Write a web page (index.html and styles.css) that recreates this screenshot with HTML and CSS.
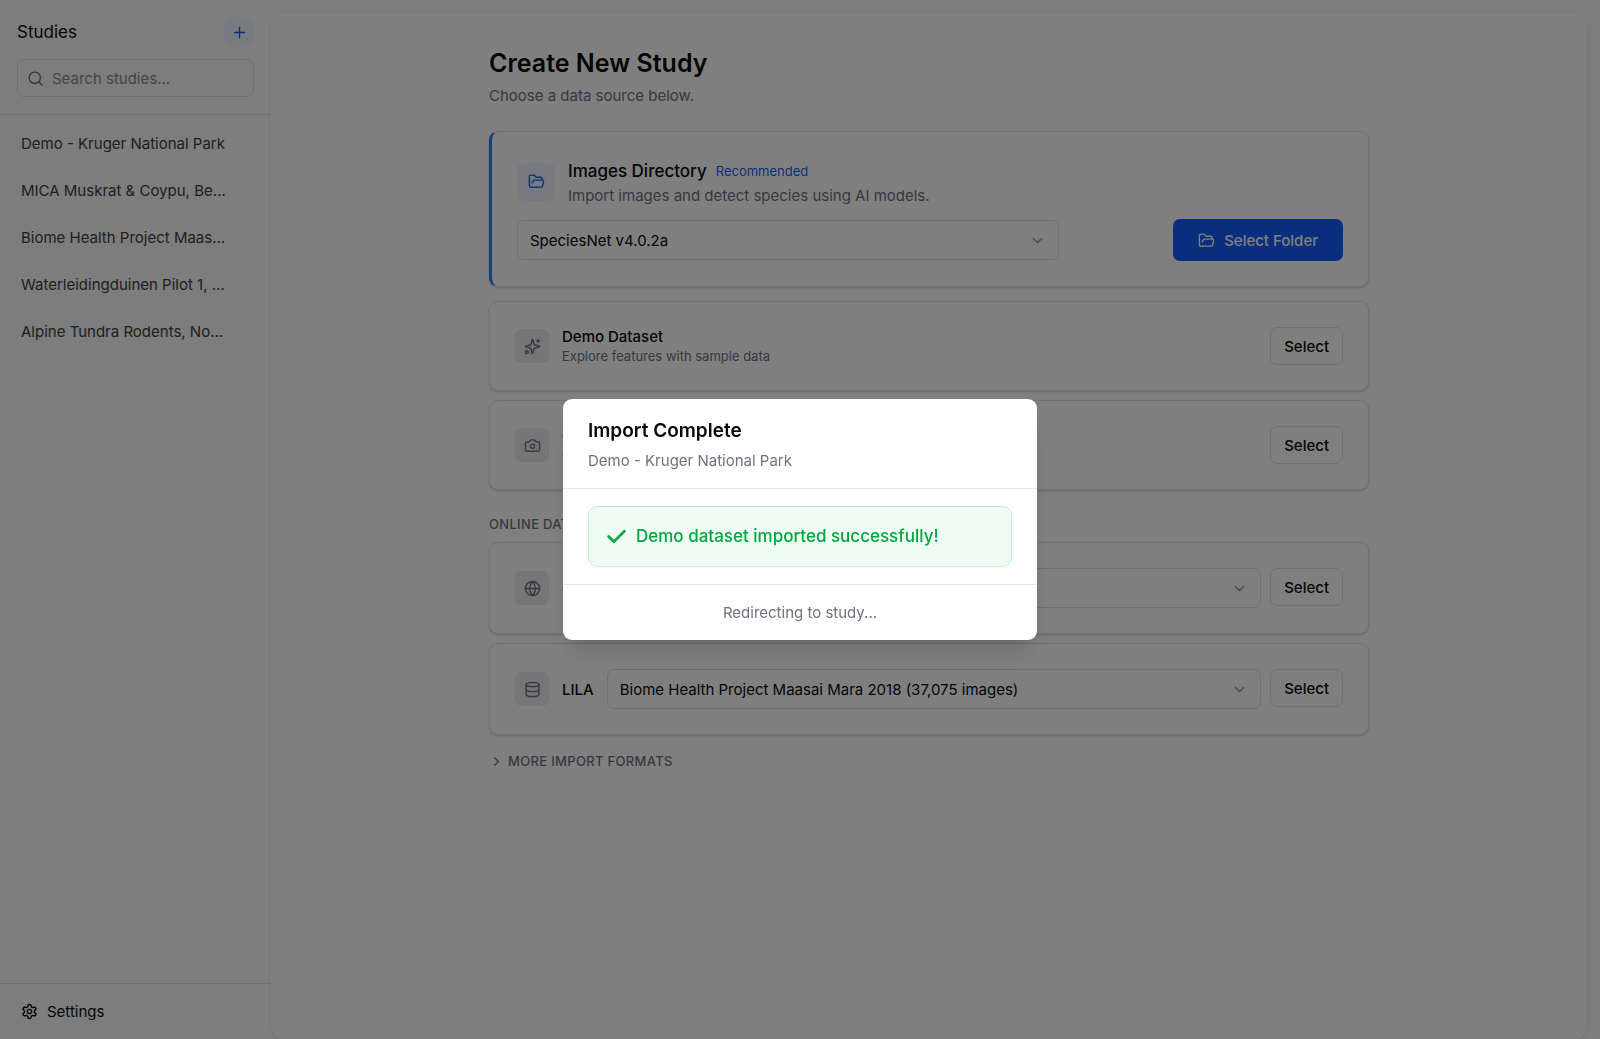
FILE: index.html
```html
<!DOCTYPE html>
<html lang="en">
<head>
    <meta charset="UTF-8">
    <meta name="viewport" content="width=device-width, initial-scale=1.0">
    <title>Create New Study</title>
    <link rel="stylesheet" href="styles.css">
</head>
<body>
    <aside class="sidebar">
        <header class="sidebar-header">
            <div class="sidebar-title">
                <h2>Studies</h2>
                <button class="add-btn" aria-label="Add study">
                    <svg class="icon" viewBox="0 0 24 24"><path d="M5 12h14M12 5v14"/></svg>
                </button>
            </div>
            <label class="search">
                <svg class="icon" viewBox="0 0 24 24"><circle cx="11" cy="11" r="8"/><path d="m21 21-4.3-4.3"/></svg>
                <input type="search" placeholder="Search studies..." aria-label="Search studies">
            </label>
        </header>
        <nav class="study-list">
            <a href="#">Demo - Kruger National Park</a>
            <a href="#">MICA Muskrat &amp; Coypu, Be…</a>
            <a href="#">Biome Health Project Maas…</a>
            <a href="#">Waterleidingduinen Pilot 1, …</a>
            <a href="#">Alpine Tundra Rodents, No…</a>
        </nav>
        <footer class="sidebar-footer">
            <a href="#">
                <svg class="icon" viewBox="0 0 24 24"><path d="M12.22 2h-.44a2 2 0 0 0-2 2v.18a2 2 0 0 1-1 1.73l-.43.25a2 2 0 0 1-2 0l-.15-.08a2 2 0 0 0-2.73.73l-.22.38a2 2 0 0 0 .73 2.73l.15.1a2 2 0 0 1 1 1.72v.51a2 2 0 0 1-1 1.74l-.15.09a2 2 0 0 0-.73 2.73l.22.38a2 2 0 0 0 2.73.73l.15-.08a2 2 0 0 1 2 0l.43.25a2 2 0 0 1 1 1.73V20a2 2 0 0 0 2 2h.44a2 2 0 0 0 2-2v-.18a2 2 0 0 1 1-1.73l.43-.25a2 2 0 0 1 2 0l.15.08a2 2 0 0 0 2.73-.73l.22-.39a2 2 0 0 0-.73-2.73l-.15-.08a2 2 0 0 1-1-1.74v-.5a2 2 0 0 1 1-1.74l.15-.09a2 2 0 0 0 .73-2.73l-.22-.38a2 2 0 0 0-2.73-.73l-.15.08a2 2 0 0 1-2 0l-.43-.25a2 2 0 0 1-1-1.73V4a2 2 0 0 0-2-2z"/><circle cx="12" cy="12" r="3"/></svg>
                Settings
            </a>
        </footer>
    </aside>

    <main class="panel">
        <div class="content">
            <h1>Create New Study</h1>
            <p class="subtitle">Choose a data source below.</p>

            <section class="card featured">
                <div class="featured-header">
                    <span class="tile tile-blue">
                        <svg class="icon" viewBox="0 0 24 24"><path d="m6 14 1.5-2.9A2 2 0 0 1 9.24 10H20a2 2 0 0 1 1.94 2.5l-1.54 6a2 2 0 0 1-1.95 1.5H4a2 2 0 0 1-2-2V5a2 2 0 0 1 2-2h3.9a2 2 0 0 1 1.69.9l.81 1.2a2 2 0 0 0 1.67.9H18a2 2 0 0 1 2 2v2"/></svg>
                    </span>
                    <div>
                        <div class="featured-title">
                            <h3>Images Directory</h3>
                            <span class="badge">Recommended</span>
                        </div>
                        <p>Import images and detect species using AI models.</p>
                    </div>
                </div>
                <div class="featured-row">
                    <div class="select">
                        <select aria-label="Model">
                            <option>SpeciesNet v4.0.2a</option>
                        </select>
                        <svg class="icon" viewBox="0 0 24 24"><path d="m6 9 6 6 6-6"/></svg>
                    </div>
                    <button class="primary-btn">
                        <svg class="icon" viewBox="0 0 24 24"><path d="m6 14 1.5-2.9A2 2 0 0 1 9.24 10H20a2 2 0 0 1 1.94 2.5l-1.54 6a2 2 0 0 1-1.95 1.5H4a2 2 0 0 1-2-2V5a2 2 0 0 1 2-2h3.9a2 2 0 0 1 1.69.9l.81 1.2a2 2 0 0 0 1.67.9H18a2 2 0 0 1 2 2v2"/></svg>
                        Select Folder
                    </button>
                </div>
            </section>

            <div class="card-group">
                <section class="card">
                    <span class="tile">
                        <svg class="icon" viewBox="0 0 24 24"><path d="M9.937 15.5A2 2 0 0 0 8.5 14.063l-6.135-1.582a.5.5 0 0 1 0-.962L8.5 9.936A2 2 0 0 0 9.937 8.5l1.582-6.135a.5.5 0 0 1 .963 0L14.063 8.5A2 2 0 0 0 15.5 9.937l6.135 1.581a.5.5 0 0 1 0 .964L15.5 14.063a2 2 0 0 0-1.437 1.437l-1.582 6.135a.5.5 0 0 1-.963 0z"/><path d="M20 2v4M22 4h-4"/><circle cx="4" cy="20" r="2"/></svg>
                    </span>
                    <div class="card-text">
                        <h3>Demo Dataset</h3>
                        <p>Explore features with sample data</p>
                    </div>
                    <button class="select-btn">Select</button>
                </section>
                <section class="card">
                    <span class="tile">
                        <svg class="icon" viewBox="0 0 24 24"><path d="M14.5 4h-5L7 7H4a2 2 0 0 0-2 2v9a2 2 0 0 0 2 2h16a2 2 0 0 0 2-2V9a2 2 0 0 0-2-2h-3z"/><circle cx="12" cy="13" r="3"/></svg>
                    </span>
                    <div class="card-text">
                        <h3>Camtrap DP</h3>
                        <p>Camera Trap Data Package</p>
                    </div>
                    <button class="select-btn">Select</button>
                </section>
            </div>

            <h2 class="section-label">Online Datasets</h2>
            <div class="card-group">
                <section class="card">
                    <span class="tile">
                        <svg class="icon" viewBox="0 0 24 24"><circle cx="12" cy="12" r="10"/><path d="M12 2a14.5 14.5 0 0 0 0 20 14.5 14.5 0 0 0 0-20M2 12h20"/></svg>
                    </span>
                    <label for="gbif">GBIF</label>
                    <div class="select">
                        <select id="gbif">
                            <option>MICA Muskrat &amp; Coypu</option>
                        </select>
                        <svg class="icon" viewBox="0 0 24 24"><path d="m6 9 6 6 6-6"/></svg>
                    </div>
                    <button class="select-btn">Select</button>
                </section>
                <section class="card">
                    <span class="tile">
                        <svg class="icon" viewBox="0 0 24 24"><ellipse cx="12" cy="5" rx="9" ry="3"/><path d="M3 5v14a9 3 0 0 0 18 0V5"/><path d="M3 12a9 3 0 0 0 18 0"/></svg>
                    </span>
                    <label for="lila">LILA</label>
                    <div class="select">
                        <select id="lila">
                            <option>Biome Health Project Maasai Mara 2018 (37,075 images)</option>
                        </select>
                        <svg class="icon" viewBox="0 0 24 24"><path d="m6 9 6 6 6-6"/></svg>
                    </div>
                    <button class="select-btn">Select</button>
                </section>
            </div>

            <button class="more-btn" aria-expanded="false">
                <svg class="icon" viewBox="0 0 24 24"><path d="m9 18 6-6-6-6"/></svg>
                More Import Formats
            </button>
        </div>
    </main>

    <div class="overlay">
        <div class="modal" role="dialog" aria-modal="true" aria-labelledby="modal-title">
            <header class="modal-header">
                <h2 id="modal-title">Import Complete</h2>
                <p>Demo - Kruger National Park</p>
            </header>
            <div class="modal-body">
                <div class="success" role="status">
                    <svg class="icon check" viewBox="0 0 24 24"><path d="M21 6 9 18l-6-6"/></svg>
                    Demo dataset imported successfully!
                </div>
            </div>
            <footer class="modal-footer">Redirecting to study...</footer>
        </div>
    </div>
</body>
</html>
```
FILE: styles.css
```css
* {
    box-sizing: border-box;
    margin: 0;
}
body {
    display: flex;
    height: 100vh;
    background: #fafafa;
    color: #0a0a0a;
    font-family: Inter, sans-serif;
    font-size: 15px;
    line-height: 21px;
}
button, input, select {
    font: inherit;
    color: inherit;
}
button {
    cursor: pointer;
}
a {
    color: inherit;
    text-decoration: none;
}
.icon {
    width: 17px;
    height: 17px;
    flex-shrink: 0;
    fill: none;
    stroke: currentColor;
    stroke-width: 2;
    stroke-linecap: round;
    stroke-linejoin: round;
}

/* Sidebar */
.sidebar {
    display: flex;
    flex-direction: column;
    width: 271px;
    flex-shrink: 0;
}
.sidebar-header {
    padding: 17px;
    border-bottom: 1px solid #e0e0e0;
}
.sidebar-title {
    display: flex;
    justify-content: space-between;
    align-items: center;
    margin-bottom: 12px;
}
.sidebar-title h2 {
    font-size: 17px;
    font-weight: 400;
}
.add-btn {
    display: flex;
    align-items: center;
    justify-content: center;
    width: 30px;
    height: 30px;
    border: none;
    border-radius: 10px;
    background: #eff6ff;
    color: #155dfc;
}
.search {
    display: flex;
    align-items: center;
    gap: 8px;
    height: 38px;
    padding: 0 9px;
    border: 1px solid #e0e0e0;
    border-radius: 7px;
    color: #717182;
}
.search input {
    flex: 1;
    min-width: 0;
    padding: 0;
    border: none;
    outline: none;
    background: none;
}
.search input::placeholder {
    color: #8a8a8f;
}
.study-list {
    display: flex;
    flex: 1;
    flex-direction: column;
    gap: 9px;
    padding: 10px 8px;
    color: #404040;
}
.study-list a {
    padding: 8px 13px;
    line-height: 22px;
    white-space: nowrap;
}
.sidebar-footer {
    padding: 8px;
    border-top: 1px solid #e0e0e0;
}
.sidebar-footer a {
    display: flex;
    align-items: center;
    gap: 9px;
    padding: 9px 13px;
}

/* Main panel */
.panel {
    flex: 1;
    margin: 13px 13px 0 0;
    padding: 34px;
    background: white;
    border-radius: 13px;
    box-shadow: 0 1px 3px rgba(0,0,0,0.1);
}
.content {
    max-width: 880px;
    margin: 0 auto;
}
h1 {
    margin-bottom: 6px;
    font-size: 25px;
    font-weight: 600;
    line-height: 32px;
}
.subtitle {
    margin-bottom: 25px;
    color: #717182;
}
h3 {
    font-size: 15px;
    font-weight: 500;
    line-height: 20px;
}
.card p, .section-label, .more-btn {
    color: #717182;
}
.card {
    display: flex;
    align-items: flex-start;
    gap: 13px;
    padding: 25px;
    background: white;
    border: 1px solid #e5e5e5;
    border-radius: 9px;
    box-shadow: 0 1px 3px rgba(0,0,0,0.1), 0 1px 2px rgba(0,0,0,0.1);
}
.card-group {
    display: flex;
    flex-direction: column;
    gap: 9px;
}
.card-text {
    flex: 1;
}
.card-text p {
    font-size: 13px;
    line-height: 18px;
}
.card label {
    align-self: center;
    font-weight: 500;
}
.tile {
    display: flex;
    align-items: center;
    justify-content: center;
    align-self: center;
    width: 34px;
    height: 34px;
    flex-shrink: 0;
    border-radius: 7px;
    background: #ececf0;
    color: #717182;
}
.tile-blue {
    width: 38px;
    height: 38px;
    background: #eff6ff;
    color: #155dfc;
}
.featured {
    flex-direction: column;
    align-items: stretch;
    margin-bottom: 14px;
    border-left: 3px solid #2b7fff;
}
.featured-header {
    display: flex;
    gap: 13px;
}
.featured-title {
    display: flex;
    align-items: center;
    gap: 9px;
}
.featured-title h3 {
    font-size: 17px;
    line-height: 28px;
}
.badge {
    color: #155dfc;
    font-size: 13px;
}
.featured-row {
    display: flex;
    align-items: center;
    justify-content: space-between;
}
.select {
    position: relative;
    flex: 1;
}
.featured .select {
    max-width: 542px;
}
.select select {
    display: block;
    width: 100%;
    height: 40px;
    padding: 0 40px 0 12px;
    appearance: none;
    background: white;
    border: 1px solid #e0e0e0;
    border-radius: 7px;
}
.select .icon {
    position: absolute;
    top: 12px;
    right: 13px;
    color: #a0a0a0;
    pointer-events: none;
}
.primary-btn, .select-btn {
    border-radius: 7px;
    font-weight: 500;
}
.primary-btn {
    display: flex;
    align-items: center;
    gap: 9px;
    height: 42px;
    padding: 0 25px;
    border: none;
    background: #155dfc;
    color: white;
}
.select-btn {
    height: 38px;
    padding: 0 13px;
    border: 1px solid #e0e0e0;
    background: white;
}
.select + .select-btn {
    margin-left: -4px;
}
.section-label, .more-btn {
    font-size: 13px;
    font-weight: 500;
    line-height: 18px;
    letter-spacing: 0.025em;
    text-transform: uppercase;
}
.section-label {
    margin: 25px 0 9px;
}
.more-btn {
    display: flex;
    align-items: center;
    gap: 4px;
    margin-top: 17px;
    padding: 0;
    border: none;
    background: none;
}
.more-btn .icon {
    width: 15px;
    height: 15px;
}

/* Import dialog */
.overlay {
    position: fixed;
    inset: 0;
    display: flex;
    align-items: center;
    justify-content: center;
    background: rgba(0,0,0,0.5);
}
.modal {
    width: 474px;
    background: white;
    border-radius: 9px;
    box-shadow: 0 20px 25px -5px rgba(0,0,0,0.1), 0 8px 10px -6px rgba(0,0,0,0.1);
}
.modal-header {
    padding: 18px 25px 17px;
    border-bottom: 1px solid #e5e5e5;
}
.modal-header h2 {
    margin-bottom: 5px;
    font-size: 19px;
    font-weight: 600;
    line-height: 28px;
}
.modal-header p, .modal-footer {
    color: #717182;
}
.modal-body {
    padding: 17px 25px;
}
.success {
    display: flex;
    align-items: center;
    gap: 9px;
    padding: 17px;
    background: #f0fdf4;
    border: 1px solid #b9f8cf;
    border-radius: 9px;
    color: #00a63e;
    font-size: 17px;
    font-weight: 500;
    line-height: 25px;
}
.check {
    width: 21px;
    height: 21px;
    stroke-width: 3;
}
.modal-footer {
    padding: 17px 25px;
    border-top: 1px solid #e5e5e5;
    text-align: center;
}
```
